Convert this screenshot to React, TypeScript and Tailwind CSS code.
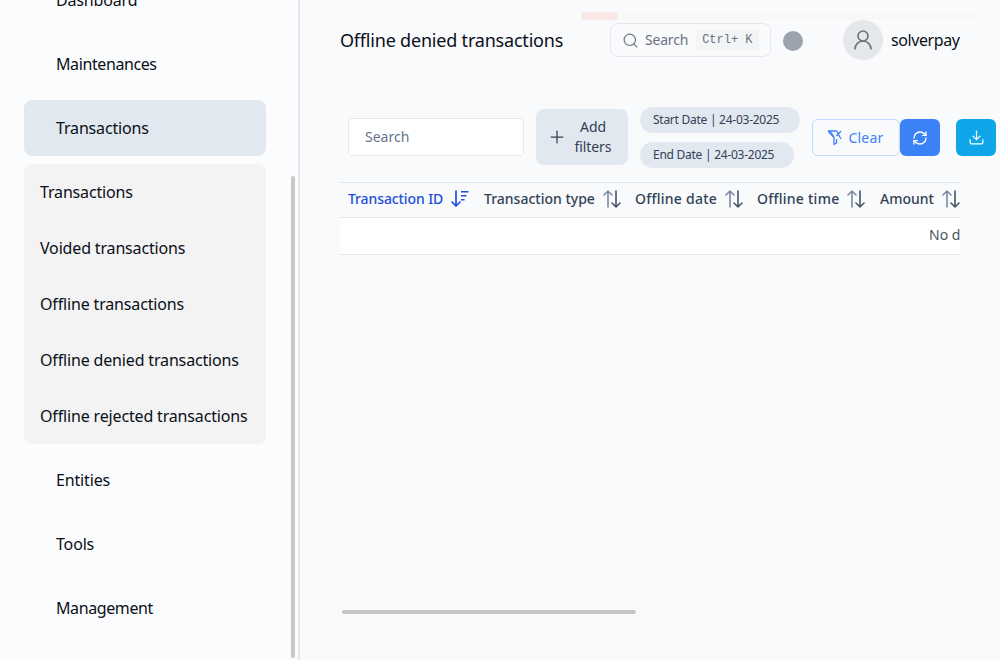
import { Download, Plus, RefreshCw, Search, UserRound } from 'lucide-react';

const subItems = [
  'Transactions',
  'Voided transactions',
  'Offline transactions',
  'Offline denied transactions',
  'Offline rejected transactions',
];

const columns = [
  { label: 'Transaction type', width: 'w-[151px]', tracking: '' },
  { label: 'Offline date', width: 'w-[122px]', tracking: 'tracking-[0.25px]' },
  { label: 'Offline time', width: 'w-[123px]', tracking: 'tracking-[0.25px]' },
  { label: 'Amount', width: 'w-[120px]', tracking: '' },
];

function NavItem({ label, active, tight }: { label: string; active?: boolean; tight?: boolean }) {
  return (
    <div className={`flex h-14 items-center rounded-lg px-8 text-[#0b0f19] ${active ? 'bg-[#e2e8f0]' : ''} ${tight ? 'tracking-[-0.4px]' : ''}`}>
      {label}
    </div>
  );
}

function SortIcon() {
  return (
    <svg width="18" height="20" viewBox="0 0 18 20" fill="none" strokeWidth="1.6" strokeLinecap="round" strokeLinejoin="round" className="shrink-0">
      <path d="M5 18V2M1 6l4-4 4 4" stroke="#7c8ba1" />
      <path d="M13 2v16M9 14l4 4 4-4" stroke="#475569" />
    </svg>
  );
}

function SortedIcon() {
  return (
    <svg width="18" height="18" viewBox="0 0 18 18" fill="none" className="shrink-0">
      <path d="M5 1v15M1 12l4 4 4-4" stroke="currentColor" strokeWidth="1.7" strokeLinecap="round" strokeLinejoin="round" />
      <path d="M10 1h7.500v1.500H10zM10 5h5.500v1.500H10zM10 9h3.500v1.500H10z" fill="currentColor" />
    </svg>
  );
}

function FilterSlashIcon() {
  return (
    <svg width="15" height="16" viewBox="0 0 15 16" fill="none" stroke="currentColor" strokeWidth="1.3" strokeLinejoin="round" className="shrink-0">
      <path d="M1 1h8.500L14 9M3 1 7 7v7.500l2.500-1.500V9" />
      <path d="M1 1l5.500 6M14 1 9.500 6" />
    </svg>
  );
}

function Sidebar() {
  return (
    <aside className="relative h-full w-[300px] shrink-0 overflow-hidden border-r-2 border-[#e5e7eb] bg-[#fbfcfe]">
      <nav className="-mt-7 flex w-[266px] flex-col gap-2 pl-6 text-base tracking-[-0.16px]">
        <NavItem label="Dashboard" />
        <NavItem label="Maintenances" tight />
        <NavItem label="Transactions" active />
        <div className="rounded-lg bg-[#f3f3f3]">
          {subItems.map((item) => (
            <div key={item} className="flex h-14 items-center whitespace-nowrap px-4 text-[#0b0f19]">
              {item}
            </div>
          ))}
        </div>
        <NavItem label="Entities" />
        <NavItem label="Tools" />
        <NavItem label="Management" tight />
      </nav>
      {/* overlay scrollbar */}
      <div className="absolute left-[291px] top-[176px] h-[482px] w-1 rounded-full bg-[#c8c8c8]" />
    </aside>
  );
}

function Header() {
  return (
    <header className="flex h-10 items-center pl-10">
      <h1 className="w-[270px] shrink-0 whitespace-nowrap text-lg tracking-[-0.2px] text-[#0b0f19]">Offline denied transactions</h1>
      <div className="flex h-[34px] w-[161px] shrink-0 items-center rounded-lg border border-[#e5e7eb] pl-[11px] text-sm text-[#6b7280]">
        <Search size={17} strokeWidth={1.6} className="mr-1.5 shrink-0" />
        <span className="tracking-[-0.2px]">Search</span>
        <kbd className="ml-2 rounded bg-[#f3f4f6] px-1.5 py-0.5 font-['Liberation_Mono',monospace] text-xs">Ctrl+ K</kbd>
      </div>
      <div className="ml-3 mt-0.5 size-5 shrink-0 rounded-full bg-[#9ca3af]" />
      <div className="ml-10 flex size-10 shrink-0 items-center justify-center rounded-full bg-[#e5e7eb] text-[#6b7280]">
        <UserRound size={24} strokeWidth={1.6} />
      </div>
      <span className="ml-2 tracking-[-0.4px] text-[#0b0f19]">solverpay</span>
    </header>
  );
}

function Toolbar() {
  return (
    <div className="mt-[47px] flex h-[61px] items-center pl-12">
      <input
        placeholder="Search"
        className="-mt-[1px] h-[38px] w-[176px] shrink-0 rounded border border-[#e5e7eb] bg-white px-4 pb-0.5 text-sm placeholder:text-[#64748b]"
      />
      <button className="-mt-0.5 ml-3 flex h-14 w-[92px] shrink-0 items-center justify-center gap-1.5 rounded-lg bg-[#e2e8f0] pr-1 text-sm leading-[20px] text-[#334155]">
        <Plus size={20} strokeWidth={1.5} className="shrink-0" />
        <span className="w-10 text-center tracking-[-0.1px]">Add filters</span>
      </button>
      <div className="ml-3 flex w-[172px] shrink-0 flex-col items-start gap-[9px] text-xs tracking-[-0.26px] text-[#334155]">
        <span className="flex h-[26px] w-40 items-center rounded-full bg-[#e2e8f0] px-[13px]">Start Date | 24-03-2025</span>
        <span className="flex h-[26px] w-[154px] items-center rounded-full bg-[#e2e8f0] px-[13px]">End Date | 24-03-2025</span>
      </div>
      <button className="flex h-[37px] w-[88px] shrink-0 items-center justify-center gap-[7px] rounded-md border border-[#bfdbfe] pr-0.5 text-sm text-[#3b82f6]">
        <FilterSlashIcon />
        <span className="tracking-[0.2px]">Clear</span>
      </button>
      <button className="flex h-[37px] w-10 shrink-0 items-center justify-center rounded-md bg-[#3b82f6] text-white">
        <RefreshCw size={16} strokeWidth={2} />
      </button>
      <button className="ml-4 flex h-[37px] w-10 shrink-0 items-center justify-center rounded-md bg-[#0ea5e9] text-white">
        <Download size={17} strokeWidth={1.7} />
      </button>
    </div>
  );
}

function DataTable() {
  return (
    <div className="ml-10 mt-[14px] w-[620px] overflow-hidden">
      <div className="flex h-9 w-max items-center border-y border-[#e2e8f0] bg-[#f8fafc] pb-0.5 pl-2 text-sm font-medium text-[#334155]">
        <div className="flex w-[136px] items-center gap-2 text-[#1d4ed8]">
          <span className="tracking-[-0.1px]">Transaction ID</span>
          <SortedIcon />
        </div>
        {columns.map((col) => (
          <div key={col.label} className={`flex items-center gap-2 ${col.width}`}>
            <span className={col.tracking}>{col.label}</span>
            <SortIcon />
          </div>
        ))}
      </div>
      <div className="flex h-[37px] w-max items-center border-b border-[#e2e8f0] bg-white pb-0.5 pl-[589px] pr-4 text-sm text-[#4b5563]">
        No data available
      </div>
    </div>
  );
}

export default function App() {
  return (
    <div className="flex h-[660px] w-[1000px] overflow-hidden bg-[#f9fafc] font-['Noto_Sans',sans-serif]">
      <Sidebar />
      <main className="relative min-w-0 flex-1 pt-5">
        <Header />
        <Toolbar />
        <DataTable />
        {/* loading bar over the header */}
        <div className="absolute left-[281px] top-3 h-2 w-[399px] overflow-hidden rounded-full bg-[#f9f8f9]">
          <div className="h-full w-9 bg-[#fbe6e6]" />
        </div>
        {/* overlay horizontal scrollbar */}
        <div className="absolute left-[42px] top-[610px] h-1 w-[294px] rounded-full bg-[#c4c4c4]" />
      </main>
    </div>
  );
}
